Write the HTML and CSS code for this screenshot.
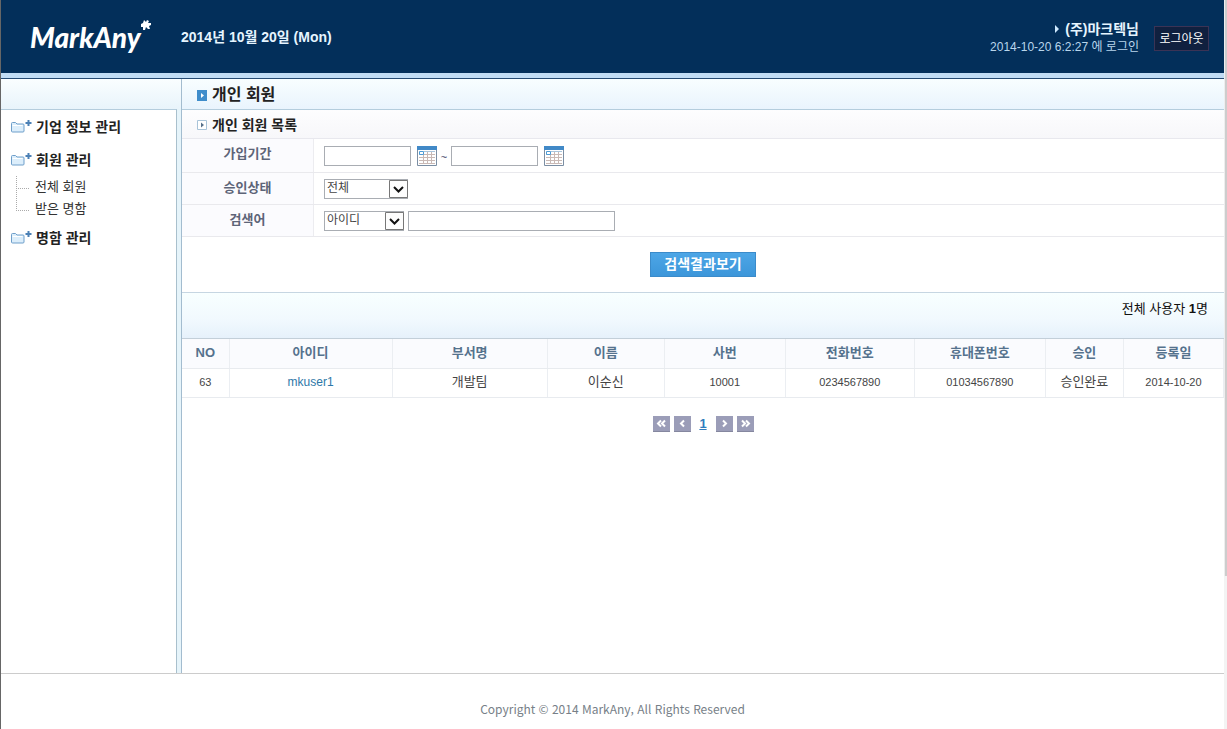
FILE: index.html
```html
<!DOCTYPE html>
<html lang="ko">
<head>
<meta charset="utf-8">
<title>MarkAny - 개인 회원</title>
<link rel="stylesheet" href="styles.css">
</head>
<body>
<svg class="defs" width="0" height="0" aria-hidden="true">
  <symbol id="folder" viewBox="0 0 22 14">
    <path d="M.5 3.500q0-1 1-1h3l1.500 1.500h6q1 0 1 1v6q0 1-1 1h-10.500q-1 0-1-1z" fill="#dceefb" stroke="#6f9fca"/>
    <path d="M1.500 5.500h10" stroke="#fff" fill="none"/>
    <path d="M17.500 0v6M14.500 3h6" stroke="#4b80b5" stroke-width="2" fill="none"/>
  </symbol>
  <symbol id="calendar" viewBox="0 0 20 20">
    <path d="M.5 .5h19v19h-19z" fill="#fff" stroke="#7b8ea3"/>
    <path d="M0 0h20v4H0z" fill="#4189c7"/>
    <path d="M2 8.500h16M2 11.500h16M2 14.500h16M2 17.500h16M6.500 6v12M10.500 6v12M14.500 6v12" stroke="#c9b9b5" fill="none"/>
    <path d="M2.500 5.500h4v3h-4z" fill="#fff" stroke="#4c9bd5"/>
    <path d="M7 5.500h11" stroke="#a9c5dd"/>
  </symbol>
</svg>
<div class="page">
  <header class="header">
    <a class="logo" href="#" aria-label="MarkAny"><span>MarkAny</span><svg class="logo-mark" width="10" height="10" viewBox="0 0 10 10" aria-hidden="true"><path d="M3 0l2 2 1-2 2 1-1 2h3v2L8 6l1 3-2 0-2-2-1 3-2 0V7L0 7V4l2-1z" fill="#fff"/></svg></a>
    <p class="today">2014년 10월 20일 (Mon)</p>
    <div class="account">
      <p class="who"><svg width="5" height="8" viewBox="0 0 5 8" aria-hidden="true"><path d="M0 0l4 4-4 4z" fill="#cfeaff"/></svg> (주)마크텍님</p>
      <p class="when">2014-10-20 6:2:27 에 로그인</p>
    </div>
    <button class="logout" type="button">로그아웃</button>
  </header>
  <div class="body">
    <aside class="sidebar">
      <nav class="nav">
        <a class="group" href="#"><svg width="22" height="14"><use href="#folder"/></svg>기업 정보 관리</a>
        <a class="group" href="#"><svg width="22" height="14"><use href="#folder"/></svg>회원 관리</a>
        <ul class="tree">
          <li><a href="#">전체 회원</a></li>
          <li><a href="#">받은 명함</a></li>
        </ul>
        <a class="group" href="#"><svg width="22" height="14"><use href="#folder"/></svg>명함 관리</a>
      </nav>
    </aside>
    <main class="content">
      <h1 class="title"><svg width="10" height="11" viewBox="0 0 10 11" aria-hidden="true"><path d="M0 0h10v11H0z" fill="#3f8dcb"/><path d="M4 3l3 2.500L4 8z" fill="#fff"/></svg>개인 회원</h1>
      <h2 class="subtitle"><svg width="10" height="10" viewBox="0 0 10 10" aria-hidden="true"><path d="M.5 .5h9v9h-9z" fill="#fff" stroke="#a8c3d8"/><path d="M4 2.500l3 2.500-3 2.500z" fill="#56708a"/></svg>개인 회원 목록</h2>
      <form class="search">
        <div class="field">
          <label class="name" for="from">가입기간</label>
          <div class="value">
            <input class="text date" id="from" type="text" aria-label="가입기간 시작">
            <button class="cal" type="button" aria-label="시작일 선택"><svg width="20" height="20"><use href="#calendar"/></svg></button>
            <span class="tilde">~</span>
            <input class="text date" type="text" aria-label="가입기간 끝">
            <button class="cal" type="button" aria-label="종료일 선택"><svg width="20" height="20"><use href="#calendar"/></svg></button>
          </div>
        </div>
        <div class="field">
          <label class="name" for="state">승인상태</label>
          <div class="value">
            <span class="drop"><select id="state"><option>전체</option></select><svg width="19" height="18" viewBox="0 0 19 18" aria-hidden="true"><path d="M.5 .5h18v17H.5z" fill="#fdfdfd" stroke="#777"/><path d="M5 7l4.500 4.500L14 7" fill="none" stroke="#111" stroke-width="2"/></svg></span>
          </div>
        </div>
        <div class="field">
          <label class="name" for="word">검색어</label>
          <div class="value">
            <span class="drop short"><select aria-label="검색 항목"><option>아이디</option></select><svg width="19" height="18" viewBox="0 0 19 18" aria-hidden="true"><path d="M.5 .5h18v17H.5z" fill="#fdfdfd" stroke="#777"/><path d="M5 7l4.500 4.500L14 7" fill="none" stroke="#111" stroke-width="2"/></svg></span>
            <input class="text word" id="word" type="text">
          </div>
        </div>
        <div class="actions"><button class="submit" type="submit">검색결과보기</button></div>
      </form>
      <p class="total">전체 사용자 <b>1</b>명</p>
      <table class="list">
        <colgroup><col class="c-no"><col class="c-id"><col class="c-dept"><col class="c-name"><col class="c-emp"><col class="c-tel"><col class="c-mobile"><col class="c-state"><col class="c-date"></colgroup>
        <thead>
          <tr><th>NO</th><th>아이디</th><th>부서명</th><th>이름</th><th>사번</th><th>전화번호</th><th>휴대폰번호</th><th>승인</th><th>등록일</th></tr>
        </thead>
        <tbody>
          <tr><td class="num">63</td><td class="id"><a href="#">mkuser1</a></td><td>개발팀</td><td>이순신</td><td class="num">10001</td><td class="num">0234567890</td><td class="num">01034567890</td><td>승인완료</td><td class="num">2014-10-20</td></tr>
        </tbody>
      </table>
      <nav class="pager" aria-label="페이지">
        <button type="button" aria-label="처음"><svg width="17" height="15" viewBox="0 0 17 15"><path d="M8 4.500l-3 3 3 3M12 4.500l-3 3 3 3"/></svg></button>
        <button type="button" aria-label="이전"><svg width="17" height="15" viewBox="0 0 17 15"><path d="M10 4.500l-3 3 3 3"/></svg></button>
        <a href="#" aria-current="page">1</a>
        <button type="button" aria-label="다음"><svg width="17" height="15" viewBox="0 0 17 15"><path d="M7 4.500l3 3-3 3"/></svg></button>
        <button type="button" aria-label="마지막"><svg width="17" height="15" viewBox="0 0 17 15"><path d="M5 4.500l3 3-3 3M9 4.500l3 3-3 3"/></svg></button>
      </nav>
    </main>
  </div>
  <footer class="footer">Copyright © 2014 MarkAny, All Rights Reserved</footer>
</div>
<div class="scroll" aria-hidden="true"><div class="thumb"></div></div>
</body>
</html>
```

FILE: styles.css
```css
* { box-sizing: border-box; }
body, p, h1, h2, ul { margin: 0; padding: 0; }
body {
  display: flex;
  min-height: 100vh;
  border-left: 1px solid #666;
  background: #fff;
  color: #333;
  font: 13px/20px "Liberation Sans", "Noto Sans CJK KR", sans-serif;
}
a { color: inherit; text-decoration: none; }
button, input, select { font: inherit; margin: 0; padding: 0; border-radius: 0; }
svg { display: block; flex: none; }
.defs { position: absolute; }
.page { flex: 1; min-width: 0; display: flex; flex-direction: column; }

/* header */
.header {
  display: flex;
  align-items: center;
  height: 79px;
  padding: 0 15px 4px 29px;
  background: #032f5a;
  border-bottom: 1px solid #244a73;
  box-shadow: inset 0 -5px #c0dcf4;
  color: #fff;
}
.logo {
  display: flex;
  align-items: flex-start;
  width: 151px;
  font: italic 900 28px/34px "Lato", sans-serif;
}
.today { font-size: 14px; font-weight: bold; color: #e6f5ff; }
.account { margin-left: auto; margin-right: 15px; padding-top: 1px; text-align: right; line-height: 18px; }
.who { display: flex; align-items: center; justify-content: flex-end; gap: 5px; font-size: 14px; font-weight: bold; color: #e6f5ff; }
.when { font-size: 12px; color: #b9d6ec; }
.logout {
  width: 55px;
  height: 25px;
  margin-top: 2px;
  padding-top: 2px;
  border: 1px solid #3b3355;
  background: #10203f;
  color: #fff;
  font-size: 12px;
  line-height: 18px;
}

/* layout */
.body { flex: 1; display: flex; }
.sidebar {
  flex: none;
  width: 181px;
  padding: 30px 4px 0 0;
  border-right: 1px solid #a3bccf;
  background: linear-gradient(#fafeff, #e8f4fb 30px, #e6f4fa 30px);
}
.nav {
  height: 100%;
  padding: 6px 0 0 10px;
  border-top: 1px solid #b4cddd;
  border-right: 1px solid #a9c0cd;
  background: #fff;
}
.group { display: flex; align-items: center; gap: 3px; height: 22px; margin-bottom: 11px; font-size: 14px; font-weight: bold; color: #222; }
.tree { list-style: none; margin: -6px 0 7px 5px; }
.tree li { position: relative; height: 22px; padding-left: 19px; line-height: 22px; }
.tree li::before {
  content: "";
  position: absolute;
  left: 0;
  top: 0;
  width: 12px;
  height: 12px;
  border-left: 1px dotted #aaa;
  border-bottom: 1px dotted #aaa;
}
.tree li:last-child::before { top: -10px; height: 22px; }

.content { flex: 1; min-width: 0; }
.title, .subtitle { display: flex; align-items: center; gap: 5px; padding: 2px 0 0 15px; font-weight: bold; color: #222; }
.title { height: 31px; font-size: 16px; border-bottom: 1px solid #b4cddd; background: linear-gradient(#f8feff, #e9f4fd); }
.subtitle { height: 29px; font-size: 14px; border-bottom: 1px solid #e8e8ee; background: linear-gradient(#fdfdfe, #f7f7fa); }

/* search form */
.field { display: flex; min-height: 32px; border-bottom: 1px solid #e9e9ed; }
.field:first-child { min-height: 34px; }
.name { width: 132px; padding: 5px 0; border-right: 1px solid #ececf0; background: #fbfbfe; text-align: center; font-weight: bold; color: #5d6478; }
.value { display: flex; align-items: center; padding-left: 10px; }
.text { height: 20px; border: 1px solid #a9adb3; background: #fff; }
.date { width: 87px; }
.word { width: 207px; }
.cal { margin-left: 6px; border: 0; background: none; }
.tilde { width: 14px; padding-top: 3px; text-align: center; font-size: 11px; color: #446; }
.drop { position: relative; display: flex; width: 84px; margin-right: 4px; }
.short { width: 80px; }
.drop select { appearance: none; width: 100%; height: 20px; padding: 0 20px 1px 2px; border: 1px solid #a9adb3; background: #fff; font-size: 12px; line-height: 17px; color: #444; }
.drop svg { position: absolute; right: 0; top: 1px; pointer-events: none; }
.actions { display: flex; justify-content: center; padding: 15px 0; }
.submit { width: 106px; height: 25px; padding-bottom: 2px; border: 1px solid #3b8bca; background: linear-gradient(#4da6e6, #3c96da); color: #fff; font-size: 14px; font-weight: bold; line-height: 20px; }

/* result list */
.total { height: 47px; padding: 6px 16px 0 0; border-top: 1px solid #c6d6e2; border-bottom: 1px solid #c3cfd9; background: linear-gradient(#f8ffff, #f1f9fe 60%, #e6f1fb); text-align: right; color: #111; }
.list { width: 100%; table-layout: fixed; border-collapse: collapse; }
.list th, .list td { height: 29px; padding: 0 0 2px; border-right: 1px solid #ebeef2; border-bottom: 1px solid #e8ebef; text-align: center; }
.list th { padding: 0; background: #fafbfe; color: #55728d; }
.list td { color: #444; }
.list td.num { font-size: 11px; }
.list td.id { font-size: 12px; color: #2d78a8; }
.c-no { width: 47px; }
.c-id { width: 163px; }
.c-dept { width: 155px; }
.c-name { width: 117px; }
.c-emp { width: 121px; }
.c-tel { width: 129px; }
.c-mobile { width: 131px; }
.c-state { width: 78px; }
.c-date { width: 100px; }

.pager { display: flex; justify-content: center; align-items: center; gap: 4px; padding-top: 16px; }
.pager button { border: 0; background: #9b9db8; border-bottom: 1px solid #85879f; }
.pager path { fill: none; stroke: #fff; stroke-width: 2; }
.pager a { width: 17px; text-align: center; font-weight: bold; color: #2f7cbd; text-decoration: underline; }

.footer { height: 56px; padding-top: 25px; border-top: 1px solid #ccc; text-align: center; font-family: "Noto Sans CJK KR", sans-serif; font-size: 12px; color: #777f88; }

.scroll { width: 3px; background: #f3f3f3; }
.thumb { height: 79%; border-left: 1px solid #eee; background: #cdcdcd; }
```
